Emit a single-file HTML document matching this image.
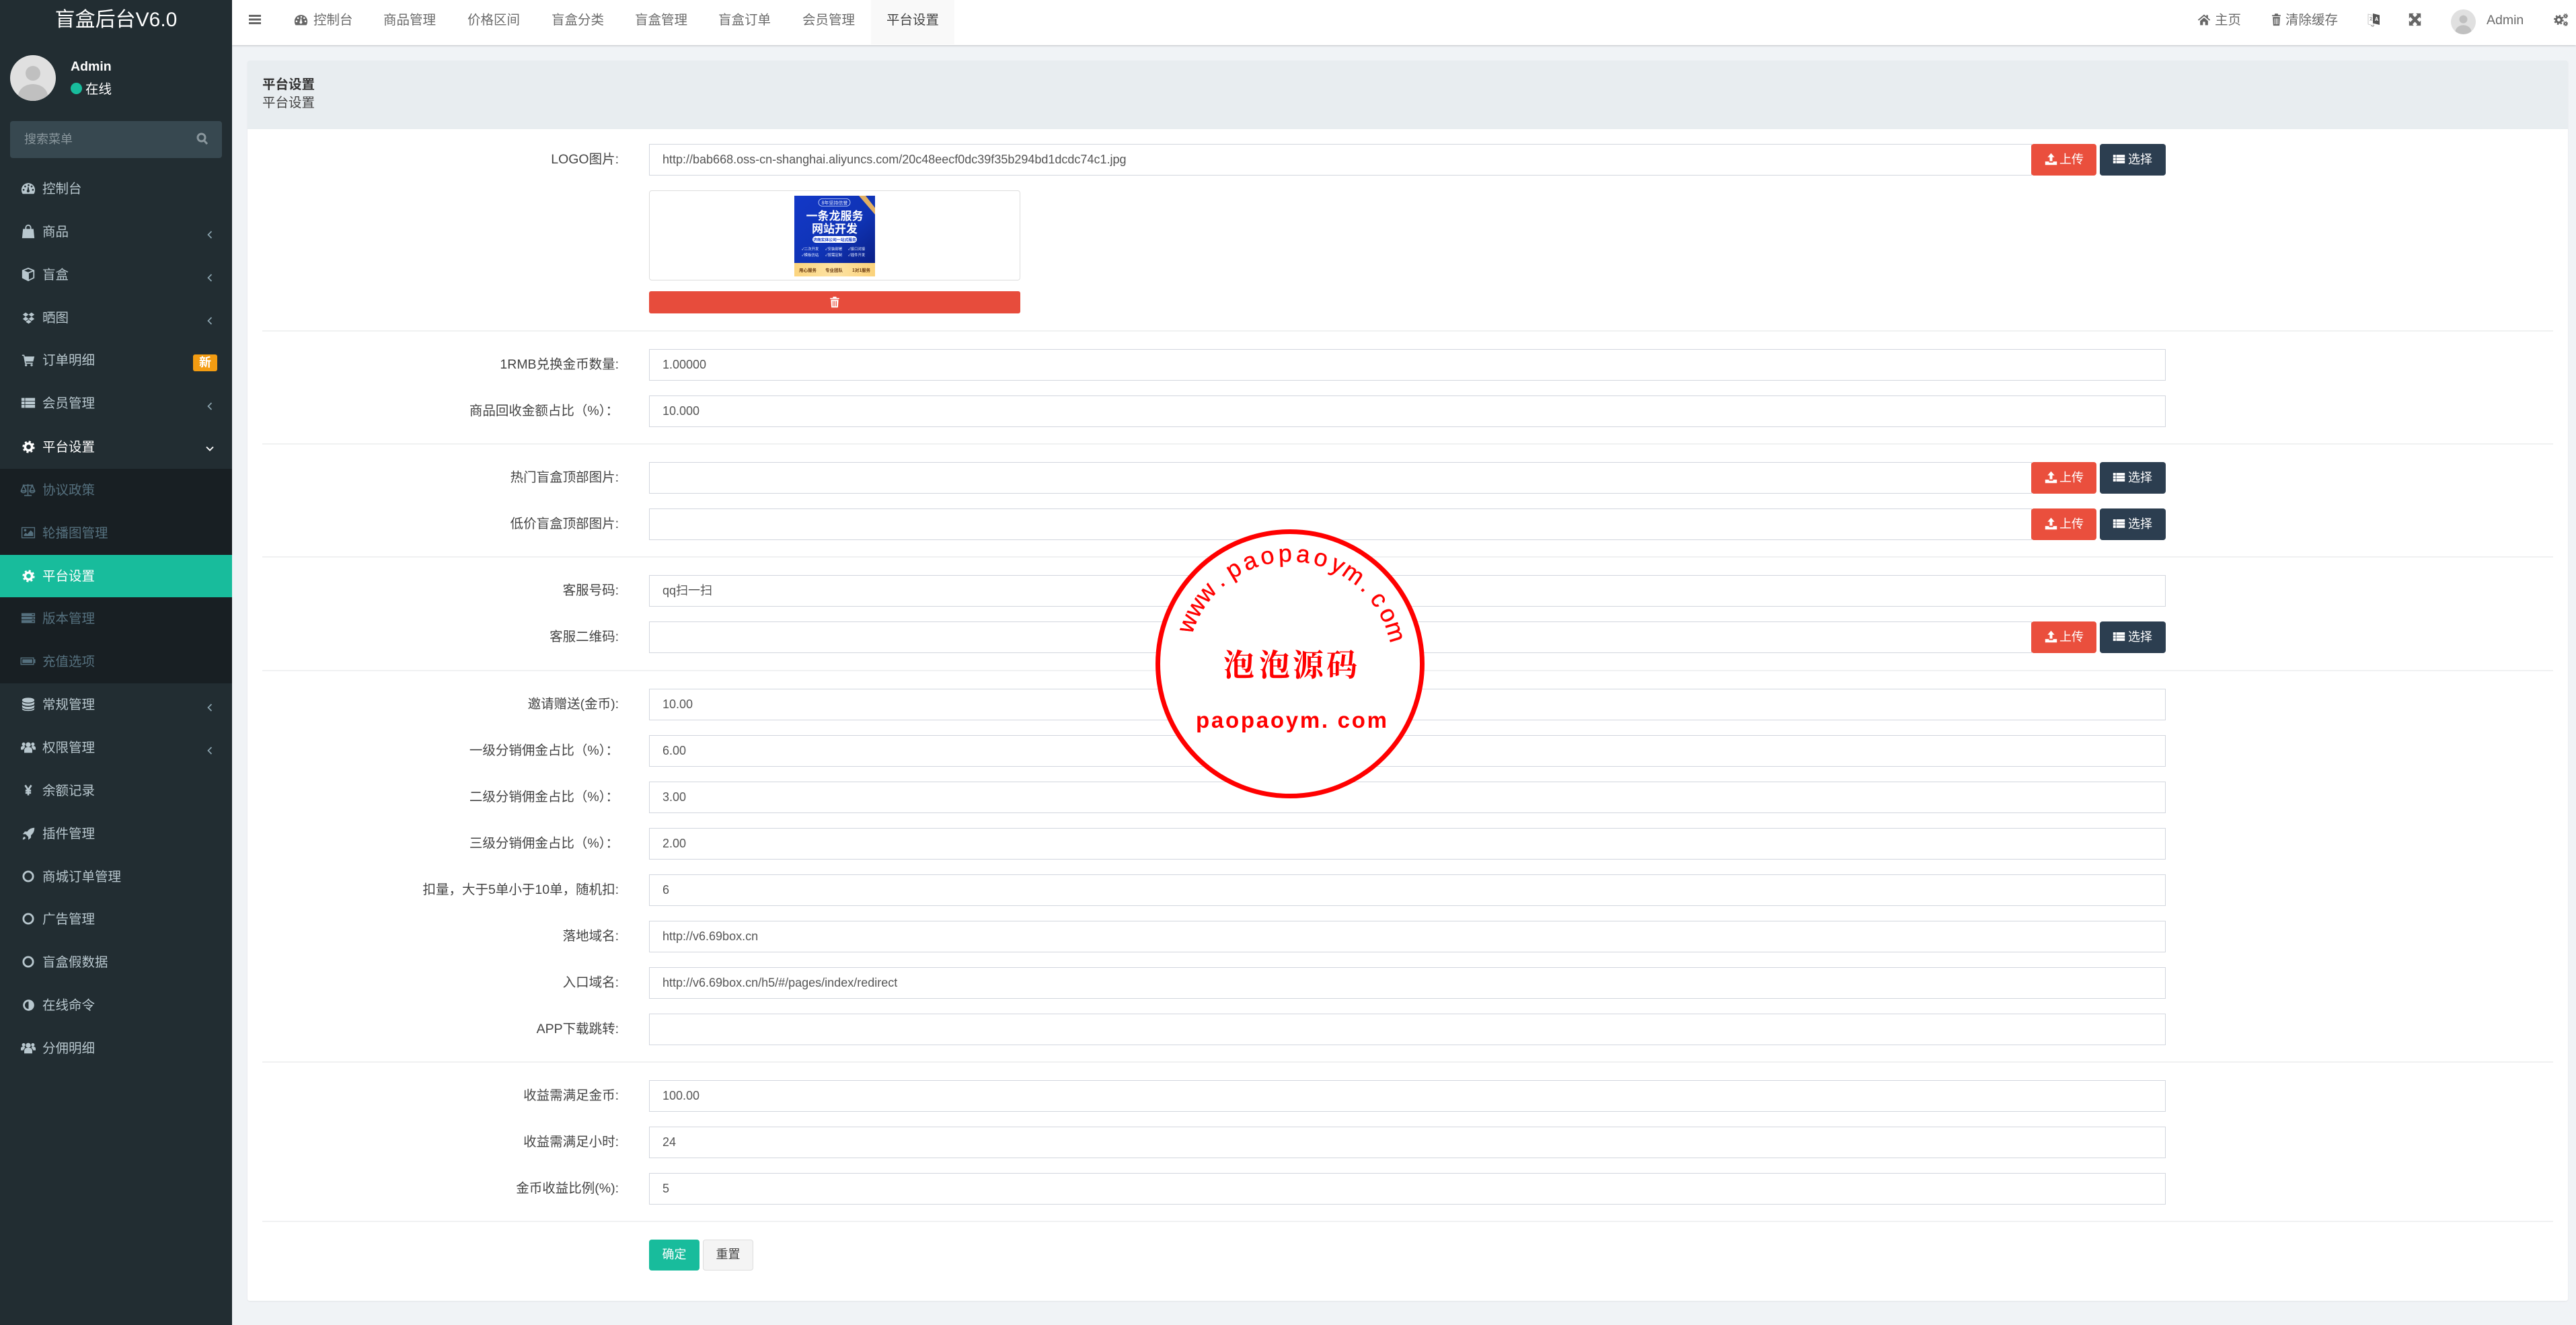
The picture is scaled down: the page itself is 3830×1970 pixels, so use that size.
<!DOCTYPE html>
<html lang="zh-CN">
<head>
<meta charset="utf-8">
<title>平台设置</title>
<style>
*{box-sizing:border-box;margin:0;padding:0}
html,body{width:3830px;height:1970px;overflow:hidden;background:#f0f3f6;font-family:"Liberation Sans","Noto Sans CJK SC",sans-serif;font-size:19.5px;color:#444}
div,span,svg{position:absolute}
svg{fill:currentColor}
#side{left:0;top:0;width:345px;height:1970px;background:#222d32;color:#b8c7ce}
#sub{left:0;top:697px;width:345px;height:319px;background:#181f23}
.m{left:0;width:345px;height:64px;line-height:65px;padding-left:63px;white-space:nowrap}
.m .ic{left:31px;top:20px;width:22px;height:22px}
.m .i18{left:33px;top:22px;width:18px;height:18px}
.m .i19{left:32.500px;top:21.500px;width:19px;height:19px}
.m .i20{left:32px;top:21px;width:20px;height:20px}
.m .ch{left:308px;top:30px;width:8px;height:12px;fill:none;stroke:#8ba3ae;stroke-width:1.7}
.s{color:#55707e}
.a{background:#18bc9c;color:#fff;height:63px}
.w{color:#fff}
.t{top:0;height:60px;line-height:60px;color:#6b6b6b;white-space:nowrap}
.n{top:19px;height:20px;color:#666}
.l{left:390px;width:530px;height:47px;line-height:47px;text-align:right;white-space:nowrap;color:#444}
.i{left:965px;width:2255px;height:47px;border:1.5px solid #d2d6de;background:#fff;padding-left:19px;line-height:44px;font-size:18px;color:#555;white-space:nowrap}
.i.g{width:2056px}
.h{left:390px;width:3406px;height:2px;background:#f0f1f2}
.b{height:47px;border-radius:4px;color:#fff;font-size:18px;line-height:47px;white-space:nowrap}
.u{left:3020px;width:97px;background:#ea4f3d}
.c{left:3122px;width:98px;background:#2c3e50}
.b svg{top:13px;width:19px;height:19px}
.u span{left:42px}.c span{left:42px}
</style>
</head>
<body>
<svg width="0" height="0" style="left:0;top:0">
<defs>
<symbol id="dash" viewBox="0 0 24 24"><path fill-rule="evenodd" d="M12 3.5C5.9 3.5 1 8.4 1 14.5c0 2.300.6 4.400 1.600 6 .2.300.5.500.9.500h17c.4 0 .7-.2.900-.5 1-1.600 1.600-3.700 1.600-6 0-6.100-4.900-11-11-11zM4.500 13a1.500 1.500 0 1 0 0 3 1.500 1.500 0 0 0 0-3zM7 7.500a1.500 1.500 0 1 0 0 3 1.500 1.500 0 0 0 0-3zM12.500 5.500a1.500 1.500 0 1 0 0 3 1.500 1.500 0 0 0 0-3zM17.500 7.500a1.500 1.500 0 1 0 0 3 1.500 1.500 0 0 0 0-3zM19.500 13a1.500 1.500 0 1 0 0 3 1.500 1.500 0 0 0 0-3zM10.500 14.500l.9-5h1.200l.9 5.200a2.300 2.300 0 1 1-3 -.2z"/></symbol>
<symbol id="bag" viewBox="0 0 24 24"><path fill-rule="evenodd" d="M3.500 8H7V6a5 5 0 0 1 10 0v2h3.500L22 23H2zM9 8h6V6a3 3 0 0 0-6 0z"/></symbol>
<symbol id="cube" viewBox="0 0 24 24"><path fill-rule="evenodd" d="M12 1l10 4v13l-10 5-10-5V5zM12 3.200 5.500 5.800 12 8.400l6.500-2.600zM13 10.200v10.200l7-3.500V7.400z"/></symbol>
<symbol id="drop" viewBox="0 0 24 24"><path d="M6.500 2 1 6l5.500 4L12 6zM17.500 2 12 6l5.500 4L23 6zM6.500 10 1 14l5.500 4L12 14zM17.500 10 12 14l5.500 4L23 14zM6.500 19.500 12 23l5.500-3.500L12 15.500z"/></symbol>
<symbol id="cart" viewBox="0 0 24 24"><path d="M1 3h4l.7 3H23l-2.200 9H7.500l.4 2H20v2H6.200L3.600 5H1zM8 19.500a2 2 0 1 0 0 4 2 2 0 0 0 0-4zM18 19.500a2 2 0 1 0 0 4 2 2 0 0 0 0-4z"/></symbol>
<symbol id="list" viewBox="0 0 24 24"><path d="M1 4h5v4.700H1zM7 4h16v4.700H7zM1 9.700h5v4.600H1zM7 9.700h16v4.600H7zM1 15.300h5V20H1zM7 15.300h16V20H7z"/></symbol>
<symbol id="gear" viewBox="0 0 24 24"><circle cx="12" cy="12" r="6.500" fill="none" stroke="currentColor" stroke-width="4.500"/><circle cx="12" cy="12" r="9.500" fill="none" stroke="currentColor" stroke-width="4" stroke-dasharray="3.700 3.760"/></symbol>
<symbol id="scale" viewBox="0 0 24 24"><path fill="none" stroke="currentColor" stroke-width="1.700" d="M12 3v18M6 21.500h12M3.500 5h17M5 5l-4 9h8zM19 5l-4 9h8zM1 14a4 3 0 0 0 8 0M15 14a4 3 0 0 0 8 0"/></symbol>
<symbol id="pic" viewBox="0 0 24 24"><path fill-rule="evenodd" d="M1 3h22v18H1zM2.500 4.500v15h19v-15z"/><path d="M5 17.500V15l3-3 2.500 2.500L16 8l4 4v5.500z"/><circle cx="7" cy="8" r="2"/></symbol>
<symbol id="serv" viewBox="0 0 24 24"><path fill-rule="evenodd" d="M1 4h22v4.700H1zM18 5.500h3.500V7H18zM1 9.700h22v4.600H1zM18 11.300h3.500v1.400H18zM1 15.300h22V20H1zM18 16.900h3.500v1.400H18z"/></symbol>
<symbol id="batt" viewBox="0 0 24 24"><path fill-rule="evenodd" d="M0 6h22v3h2v6h-2v3H0zM1.500 7.500v9h19v-9zM3 9h16v6H3z"/></symbol>
<symbol id="db" viewBox="0 0 24 24"><path d="M12 1.500C6 1.500 2 3.200 2 5.500s4 4 10 4 10-1.700 10-4-4-4-10-4zM2 8v2.500c0 2.300 4 4 10 4s10-1.700 10-4V8c-2 1.800-5.700 2.800-10 2.800S4 9.800 2 8zM2 13.500V16c0 2.300 4 4 10 4s10-1.700 10-4v-2.500c-2 1.800-5.700 2.800-10 2.800S4 15.300 2 13.500zM2 18.500v1c0 2.300 4 3.500 10 3.500s10-1.200 10-3.500v-1c-2 1.800-5.700 2.800-10 2.800S4 20.300 2 18.500z"/></symbol>
<symbol id="users" viewBox="0 0 24 24"><circle cx="12" cy="8" r="4"/><circle cx="4.500" cy="7" r="2.800"/><circle cx="19.500" cy="7" r="2.800"/><path d="M5.500 21v-4.500a4.500 4.500 0 0 1 4.500-4.500h4a4.500 4.500 0 0 1 4.500 4.500V21zM0 16v-3a3 3 0 0 1 3-3h3l1 2.200A6 6 0 0 0 4 16zM24 16v-3a3 3 0 0 0-3-3h-3l-1 2.200a6 6 0 0 1 3 3.800z"/></symbol>
<symbol id="yen" viewBox="0 0 24 24"><path fill="none" stroke="currentColor" stroke-width="3.600" d="M6 2l6 9.500L18 2M12 11v11M6.500 12.500h11M6.500 17h11"/></symbol>
<symbol id="rock" viewBox="0 0 24 24"><path d="M23 1c-6 0-10 2.500-13.500 7H5l-4 5h5.500l5 5v5.500l5-4V15c4.500-3.500 6.500-8 6.500-14zM4 17.500c-2 1-3 3.500-3 5.500 2 0 4.500-1 5.500-3z"/></symbol>
<symbol id="circ" viewBox="0 0 24 24"><circle cx="12" cy="12" r="9.500" fill="none" stroke="currentColor" stroke-width="3.800"/></symbol>
<symbol id="adj" viewBox="0 0 24 24"><path fill-rule="evenodd" d="M12 1.500a10.500 10.500 0 1 0 0 21 10.500 10.500 0 0 0 0-21zM12 5a7 7 0 0 0 0 14z"/></symbol>
<symbol id="home" viewBox="0 0 24 24"><path d="M12 3 1 12.500 2.500 14 12 6l9.500 8 1.500-1.500-4-3.400V4h-3v2.500zM5 14.500V22h5v-6h4v6h5v-7.500L12 8.500z"/></symbol>
<symbol id="trash" viewBox="0 0 24 24"><path fill-rule="evenodd" d="M9 1.500h6l1 2.500h5v2.200H3V4h5zM4.500 7.500h15L18.500 23h-13zM8 10v10.500h1.500V10zM11.250 10v10.500h1.500V10zM14.500 10v10.500H16V10z"/></symbol>
<symbol id="up" viewBox="0 0 24 24"><path d="M12 1l6.500 7.500H14.500V16h-5V8.500H5.500zM1 16.500h7v1.200a1 1 0 0 0 1 1h6a1 1 0 0 0 1-1v-1.200h7V23H1z"/></symbol>
<symbol id="full" viewBox="0 0 24 24"><path d="M1 1h9L7.500 3.500 12 8l4.500-4.500L14 1h9v9l-2.500-2.500L16 12l4.500 4.500L23 14v9h-9l2.500-2.500L12 16l-4.500 4.500L10 23H1v-9l2.500 2.500L8 12 3.500 7.500 1 10z"/></symbol>
<symbol id="gears" viewBox="0 0 24 24"><circle cx="8.500" cy="12" r="4.500" fill="none" stroke="currentColor" stroke-width="3.500"/><circle cx="8.500" cy="12" r="7" fill="none" stroke="currentColor" stroke-width="3" stroke-dasharray="2.800 2.700"/><circle cx="20" cy="5.500" r="2" fill="none" stroke="currentColor" stroke-width="2"/><circle cx="20" cy="5.500" r="3.500" fill="none" stroke="currentColor" stroke-width="1.500" stroke-dasharray="1.400 1.350"/><circle cx="20" cy="18.500" r="2" fill="none" stroke="currentColor" stroke-width="2"/><circle cx="20" cy="18.500" r="3.500" fill="none" stroke="currentColor" stroke-width="1.500" stroke-dasharray="1.400 1.350"/></symbol>
<symbol id="ava" viewBox="0 0 68 68"><clipPath id="cl"><circle cx="34" cy="34" r="34"/></clipPath><circle cx="34" cy="34" r="34" fill="#e0e0e0"/><ellipse cx="34" cy="27" rx="11" ry="11" fill="#c0c0c0"/><ellipse cx="34" cy="61" rx="22" ry="18" fill="#c0c0c0" clip-path="url(#cl)"/></symbol>
</defs>
</svg>

<!-- top navbar -->
<div style="left:345px;top:0;width:3485px;height:67px;background:#fff;box-shadow:0 1px 3px rgba(0,0,0,.2)"></div>
<div style="left:1295px;top:0;width:124px;height:66px;background:#f9f9f9"></div>
<svg style="left:370px;top:22px;width:18px;height:14px;color:#666" viewBox="0 0 18 14" preserveAspectRatio="none"><path d="M0 0h18v3H0zM0 5.500h18v3H0zM0 11h18v3H0z"/></svg>
<svg class="n" style="left:437px;width:21px;height:21px" viewBox="0 0 24 24"><use href="#dash"/></svg>
<div class="t" style="left:466px">控制台</div>
<div class="t" style="left:570px">商品管理</div>
<div class="t" style="left:695px">价格区间</div>
<div class="t" style="left:820px">盲盒分类</div>
<div class="t" style="left:944px">盲盒管理</div>
<div class="t" style="left:1068px">盲盒订单</div>
<div class="t" style="left:1193px">会员管理</div>
<div class="t" style="left:1318px;color:#444">平台设置</div>

<svg class="n" style="left:3267px;width:20px;height:20px" viewBox="0 0 24 24"><use href="#home"/></svg>
<div class="t" style="left:3293px">主页</div>
<svg class="n" style="left:3376px;width:17px;height:20px" viewBox="0 0 24 24" preserveAspectRatio="none"><use href="#trash"/></svg>
<div class="t" style="left:3398px">清除缓存</div>
<svg style="left:3520px;top:18px;width:19px;height:22px" viewBox="0 0 19 22"><path d="M1 3l8 2v15l-8-2z" fill="#fff" stroke="#bbb" stroke-width=".8"/><path d="M8 2l10 2.500V19L8 16.500z" fill="#555"/><path d="M11 13l2-6h1l2 6h-1.200l-.4-1.300h-1.800l-.4 1.300zM12.900 10.800h1.200l-.6-2z" fill="#fff"/><path d="M3 8h4M5 7v1M3.500 13 6.500 9M4 10l3 3M5 20l3 1.500 2-2" fill="none" stroke="#888" stroke-width=".8"/></svg>
<svg class="n" style="left:3581px;width:19px;height:20px" viewBox="0 0 24 24" preserveAspectRatio="none"><use href="#full"/></svg>
<svg style="left:3644px;top:14px;width:37px;height:37px" viewBox="0 0 68 68"><use href="#ava"/></svg>
<div class="t" style="left:3697px">Admin</div>
<svg class="n" style="left:3797px;width:21px;height:21px" viewBox="0 0 24 24"><use href="#gears"/></svg>

<!-- panel -->
<div style="left:368px;top:90px;width:3450px;height:1844px;background:#fff;border-radius:3px;box-shadow:0 1px 2px rgba(0,0,0,.06)"></div>
<div style="left:368px;top:90px;width:3450px;height:102px;background:#e8edf0;border-radius:3px 3px 0 0"></div>
<div style="left:390px;top:111px;line-height:30px;font-weight:700;color:#333;white-space:nowrap">平台设置</div>
<div style="left:390px;top:138px;line-height:30px;color:#444;white-space:nowrap">平台设置</div>

<!-- rows -->
<div class="l" style="top:214px">LOGO图片:</div>
<div class="i g" style="top:214px">http://bab668.oss-cn-shanghai.aliyuncs.com/20c48eecf0dc39f35b294bd1dcdc74c1.jpg</div>
<div class="b u" style="top:214px"><svg style="left:20px" viewBox="0 0 24 24"><use href="#up"/></svg><span>上传</span></div>
<div class="b c" style="top:214px"><svg style="left:19px" viewBox="0 0 24 24"><use href="#list"/></svg><span>选择</span></div>

<div style="left:965px;top:283px;width:552px;height:134px;border:1.500px solid #ddd;border-radius:4px;background:#fff"></div>
<svg style="left:1181px;top:291px;width:120px;height:120px" viewBox="0 0 120 120">
<defs><linearGradient id="bl" x1="0" y1="0" x2="1" y2="1"><stop offset="0" stop-color="#1338c8"/><stop offset=".6" stop-color="#0f33b4"/><stop offset="1" stop-color="#0a1f86"/></linearGradient>
<linearGradient id="yl" x1="0" y1="0" x2="1" y2="0"><stop offset="0" stop-color="#fcd57f"/><stop offset=".5" stop-color="#fde3a4"/><stop offset="1" stop-color="#fbd27a"/></linearGradient></defs>
<rect width="120" height="100" fill="url(#bl)"/>
<rect y="100" width="120" height="20" fill="url(#yl)"/>
<polygon points="96,0 106,0 120,18 120,28" fill="#e2b063"/>
<rect x="36" y="4.500" width="47" height="11" rx="5.500" fill="none" stroke="#cfe0ff" stroke-width=".8"/>
<text x="60" y="13" text-anchor="middle" font-size="7" fill="#e8efff" font-family="Noto Sans CJK SC,sans-serif">8年坚持信誉</text>
<text x="60" y="36" text-anchor="middle" font-size="17" font-weight="700" fill="#fff" font-family="Noto Sans CJK SC,sans-serif">一条龙服务</text>
<text x="60" y="55" text-anchor="middle" font-size="17" font-weight="700" fill="#fff" font-family="Noto Sans CJK SC,sans-serif">网站开发</text>
<rect x="27" y="60" width="66" height="10" rx="5" fill="#fff"/>
<text x="60" y="67.500" text-anchor="middle" font-size="5.800" font-weight="700" fill="#1338c8" font-family="Noto Sans CJK SC,sans-serif">济南实体公司一站式服务</text>
<text x="11" y="81" font-size="5.400" fill="#e8efff" font-family="Noto Sans CJK SC,sans-serif">✓二次开发</text>
<text x="46" y="81" font-size="5.400" fill="#e8efff" font-family="Noto Sans CJK SC,sans-serif">✓安装部署</text>
<text x="80" y="81" font-size="5.400" fill="#e8efff" font-family="Noto Sans CJK SC,sans-serif">✓接口对接</text>
<text x="11" y="90" font-size="5.400" fill="#e8efff" font-family="Noto Sans CJK SC,sans-serif">✓模板仿站</text>
<text x="46" y="90" font-size="5.400" fill="#e8efff" font-family="Noto Sans CJK SC,sans-serif">✓按需定制</text>
<text x="80" y="90" font-size="5.400" fill="#e8efff" font-family="Noto Sans CJK SC,sans-serif">✓插件开发</text>
<text x="7" y="113" font-size="6.500" font-weight="700" fill="#6a3a10" font-family="Noto Sans CJK SC,sans-serif">用心服务</text>
<text x="46" y="113" font-size="6.500" font-weight="700" fill="#6a3a10" font-family="Noto Sans CJK SC,sans-serif">专业团队</text>
<text x="86" y="113" font-size="6.500" font-weight="700" fill="#6a3a10" font-family="Noto Sans CJK SC,sans-serif">1对1服务</text>
</svg>
<div style="left:965px;top:433px;width:552px;height:33px;background:#e74c3c;border-radius:3px"></div>
<svg style="left:1232px;top:440px;width:18px;height:18px;color:#fff" viewBox="0 0 24 24"><use href="#trash"/></svg>
<div class="h" style="top:491px"></div>

<div class="l" style="top:519px">1RMB兑换金币数量:</div><div class="i" style="top:519px">1.00000</div>
<div class="l" style="top:588px">商品回收金额占比（%）：</div><div class="i" style="top:588px">10.000</div>
<div class="h" style="top:659px"></div>

<div class="l" style="top:687px">热门盲盒顶部图片:</div><div class="i g" style="top:687px"></div>
<div class="b u" style="top:687px"><svg style="left:20px" viewBox="0 0 24 24"><use href="#up"/></svg><span>上传</span></div>
<div class="b c" style="top:687px"><svg style="left:19px" viewBox="0 0 24 24"><use href="#list"/></svg><span>选择</span></div>
<div class="l" style="top:756px">低价盲盒顶部图片:</div><div class="i g" style="top:756px"></div>
<div class="b u" style="top:756px"><svg style="left:20px" viewBox="0 0 24 24"><use href="#up"/></svg><span>上传</span></div>
<div class="b c" style="top:756px"><svg style="left:19px" viewBox="0 0 24 24"><use href="#list"/></svg><span>选择</span></div>
<div class="h" style="top:827px"></div>

<div class="l" style="top:855px">客服号码:</div><div class="i" style="top:855px">qq扫一扫</div>
<div class="l" style="top:924px">客服二维码:</div><div class="i g" style="top:924px"></div>
<div class="b u" style="top:924px"><svg style="left:20px" viewBox="0 0 24 24"><use href="#up"/></svg><span>上传</span></div>
<div class="b c" style="top:924px"><svg style="left:19px" viewBox="0 0 24 24"><use href="#list"/></svg><span>选择</span></div>
<div class="h" style="top:996px"></div>

<div class="l" style="top:1024px">邀请赠送(金币):</div><div class="i" style="top:1024px">10.00</div>
<div class="l" style="top:1093px">一级分销佣金占比（%）：</div><div class="i" style="top:1093px">6.00</div>
<div class="l" style="top:1162px">二级分销佣金占比（%）：</div><div class="i" style="top:1162px">3.00</div>
<div class="l" style="top:1231px">三级分销佣金占比（%）：</div><div class="i" style="top:1231px">2.00</div>
<div class="l" style="top:1300px">扣量，大于5单小于10单，随机扣:</div><div class="i" style="top:1300px">6</div>
<div class="l" style="top:1369px">落地域名:</div><div class="i" style="top:1369px">http://v6.69box.cn</div>
<div class="l" style="top:1438px">入口域名:</div><div class="i" style="top:1438px">http://v6.69box.cn/h5/#/pages/index/redirect</div>
<div class="l" style="top:1507px">APP下载跳转:</div><div class="i" style="top:1507px"></div>
<div class="h" style="top:1578px"></div>

<div class="l" style="top:1606px">收益需满足金币:</div><div class="i" style="top:1606px">100.00</div>
<div class="l" style="top:1675px">收益需满足小时:</div><div class="i" style="top:1675px">24</div>
<div class="l" style="top:1744px">金币收益比例(%):</div><div class="i" style="top:1744px">5</div>
<div class="h" style="top:1815px"></div>

<div style="left:965px;top:1843px;width:75px;height:46px;background:#18bc9c;border-radius:4px;color:#fff;font-size:18px;line-height:45px;text-align:center">确定</div>
<div style="left:1045px;top:1843px;width:75px;height:46px;background:#f4f4f4;border:1.500px solid #ddd;border-radius:4px;color:#444;font-size:18px;line-height:42px;text-align:center">重置</div>

<!-- sidebar -->
<div id="side">
<div style="left:0;top:0;width:345px;height:58px;line-height:60px;text-align:center;color:#fff;font-size:30px;white-space:nowrap">盲盒后台V6.0</div>
<svg style="left:15px;top:82px;width:68px;height:68px" viewBox="0 0 68 68"><use href="#ava"/></svg>
<div style="left:105px;top:84px;line-height:30px;color:#fff;font-weight:700">Admin</div>
<div style="left:105px;top:123px;width:17px;height:17px;border-radius:50%;background:#18bc9c"></div>
<div style="left:127px;top:118px;line-height:30px;color:#fff;white-space:nowrap">在线</div>
<div style="left:15px;top:180px;width:315px;height:55px;background:#374850;border-radius:4px"></div>
<div style="left:36px;top:180px;line-height:55px;font-size:18px;color:#8a979d;white-space:nowrap">搜索菜单</div>
<svg style="left:292px;top:197px;width:17px;height:18px;fill:none;stroke:#8a979d;stroke-width:3" viewBox="0 0 17 18"><circle cx="7.500" cy="7.500" r="5.500"/><path d="M11.500 12l4.500 5"/></svg>

<div class="m" style="top:249px"><svg class="ic"><use href="#dash"/></svg>控制台</div>
<div class="m" style="top:313px"><svg class="ic"><use href="#bag"/></svg>商品<svg class="ch" viewBox="0 0 8 12"><path d="M6.500 1 1.500 6l5 5"/></svg></div>
<div class="m" style="top:377px"><svg class="ic"><use href="#cube"/></svg>盲盒<svg class="ch" viewBox="0 0 8 12"><path d="M6.500 1 1.500 6l5 5"/></svg></div>
<div class="m" style="top:441px"><svg class="i19"><use href="#drop" width="19" height="19"/></svg>晒图<svg class="ch" viewBox="0 0 8 12"><path d="M6.500 1 1.500 6l5 5"/></svg></div>
<div class="m" style="top:504px"><svg class="i20"><use href="#cart" width="20" height="20"/></svg>订单明细</div>
<div style="left:287px;top:527px;width:36px;height:25px;background:#f39c12;border-radius:3px;color:#fff;font-weight:700;font-size:18px;line-height:24px;text-align:center">新</div>
<div class="m" style="top:568px"><svg class="ic"><use href="#list"/></svg>会员管理<svg class="ch" viewBox="0 0 8 12"><path d="M6.500 1 1.500 6l5 5"/></svg></div>
<div class="m w" style="top:633px"><svg class="i19"><use href="#gear" width="19" height="19"/></svg>平台设置<svg style="left:306px;top:30px;width:12px;height:8px;fill:none;stroke:#fff;stroke-width:1.900" viewBox="0 0 12 8"><path d="M1 1.500l5 5 5-5"/></svg></div>
<div id="sub"></div>
<div class="m s" style="top:697px"><svg class="ic" style="left:29px;width:25px"><use href="#scale"/></svg>协议政策</div>
<div class="m s" style="top:761px"><svg class="ic"><use href="#pic"/></svg>轮播图管理</div>
<div class="m a w" style="top:825px"><svg class="i19"><use href="#gear" width="19" height="19"/></svg>平台设置</div>
<div class="m s" style="top:888px"><svg class="ic"><use href="#serv"/></svg>版本管理</div>
<div class="m s" style="top:952px"><svg class="ic" style="left:29px;width:25px"><use href="#batt"/></svg>充值选项</div>
<div class="m" style="top:1016px"><svg class="ic"><use href="#db"/></svg>常规管理<svg class="ch" viewBox="0 0 8 12"><path d="M6.500 1 1.500 6l5 5"/></svg></div>
<div class="m" style="top:1080px"><svg class="ic"><use href="#users"/></svg>权限管理<svg class="ch" viewBox="0 0 8 12"><path d="M6.500 1 1.500 6l5 5"/></svg></div>
<div class="m" style="top:1144px"><svg class="i18"><use href="#yen" width="18" height="18"/></svg>余额记录</div>
<div class="m" style="top:1208px"><svg class="i19"><use href="#rock" width="19" height="19"/></svg>插件管理</div>
<div class="m" style="top:1272px"><svg class="i18"><use href="#circ" width="18" height="18"/></svg>商城订单管理</div>
<div class="m" style="top:1335px"><svg class="i18"><use href="#circ" width="18" height="18"/></svg>广告管理</div>
<div class="m" style="top:1399px"><svg class="i18"><use href="#circ" width="18" height="18"/></svg>盲盒假数据</div>
<div class="m" style="top:1463px"><svg class="i19"><use href="#adj" width="19" height="19"/></svg>在线命令</div>
<div class="m" style="top:1527px"><svg class="ic"><use href="#users"/></svg>分佣明细</div>
</div>

<!-- watermark stamp -->
<svg style="left:0;top:0;width:3830px;height:1970px" viewBox="0 0 3830 1970">
<circle cx="1918" cy="987" r="196.500" fill="#fff" stroke="#f00" stroke-width="7"/>
<text font-family="Liberation Sans,sans-serif" font-size="36" fill="#f00" stroke="#f00" stroke-width=".4"
x="1771.800 1780.800 1793.600 1815.900 1831.500 1853.200 1876.700 1901.300 1926.400 1951.200 1976.100 1993.400 2021.300 2035.900 2049.600 2059"
y="943.600 920.300 898.600 874.200 861.600 849.100 840.400 835.500 834.900 838.400 846.300 854.100 875.400 890.600 910.300 928.300"
rotate="-68.600 -59.160 -49.720 -40.280 -30.840 -21.400 -11.960 -2.520 6.920 16.360 25.800 35.240 44.680 54.120 63.560 73">www.paopaoym.com</text>
<text x="1842 1895 1945 1995" y="1005" text-anchor="middle" font-family="Noto Serif CJK SC,serif" font-weight="700" font-size="46" fill="#f00">泡泡源码</text>
<text x="1778" y="1082" textLength="284" lengthAdjust="spacing" font-family="Liberation Sans,sans-serif" font-weight="700" font-size="33" fill="#f00">paopaoym. com</text>
</svg>
</body>
</html>
